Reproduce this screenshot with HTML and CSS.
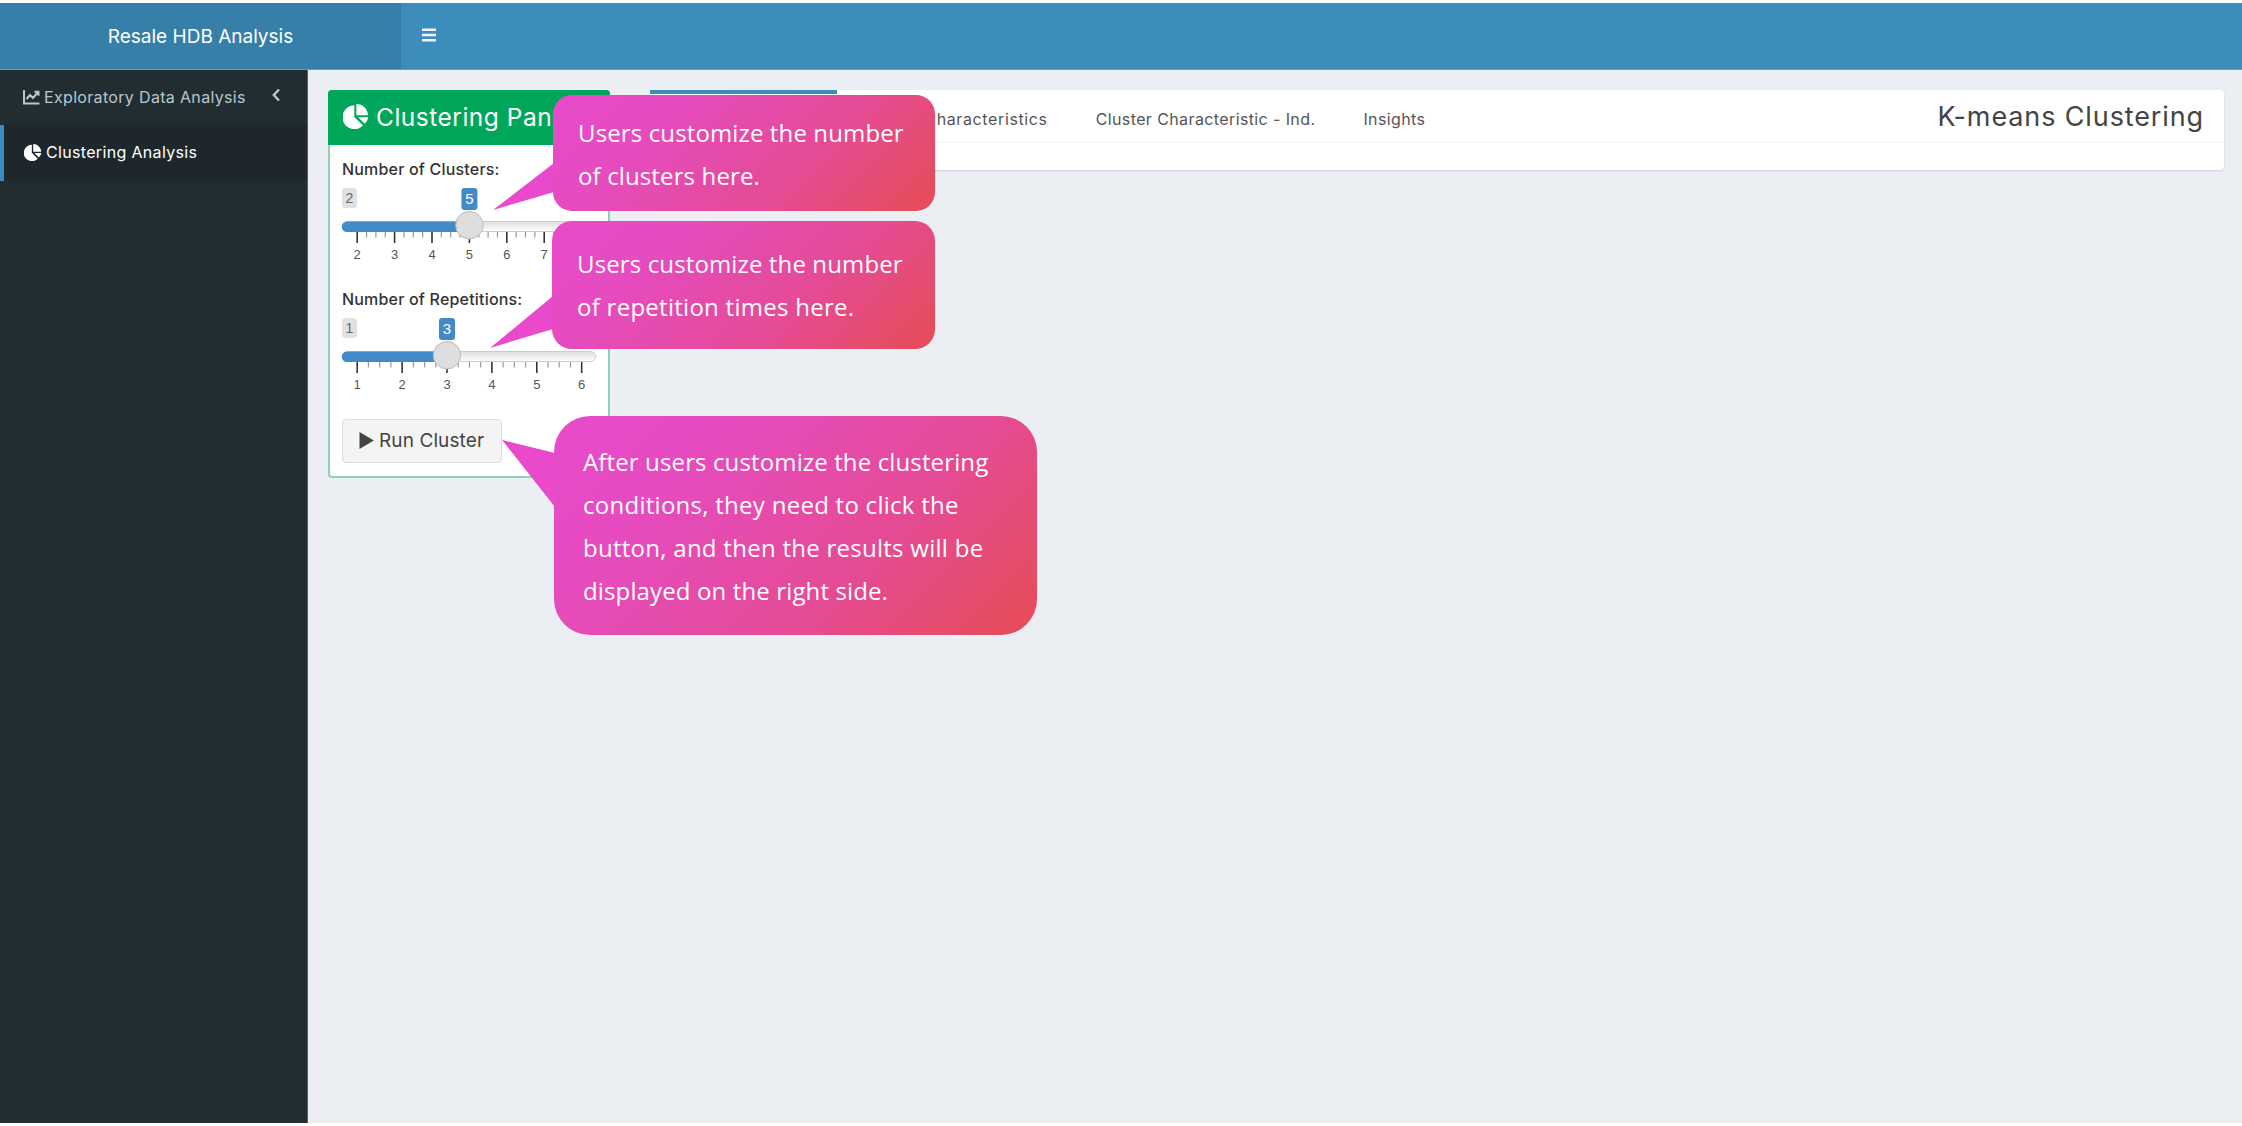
FILE: index.html
```html
<!DOCTYPE html>
<html lang="en">
<head>
<meta charset="utf-8">
<title>Resale HDB Analysis</title>
<link rel="stylesheet" href="styles.css">
</head>
<body>
<div class="app">
  <header class="header">
    <div class="logo">Resale HDB Analysis</div>
    <svg class="menu" viewBox="0 0 14 14"><path d="M0 1.8h14M0 7h14M0 12.200h14"/></svg>
  </header>
  <div class="body">
    <nav class="sidebar">
      <div class="item">
        <svg class="ico-line" viewBox="0 0 17 15"><path d="M1 0v13.500h15.500M3.500 9l3.500-4 3 3 5-6M11.500 1.700h4v4"/></svg>
        <span>Exploratory Data Analysis</span>
        <svg class="chev" viewBox="0 0 8 14"><path d="M7 1.500 1.800 7 7 12.500"/></svg>
      </div>
      <div class="item active">
        <svg class="ico-pie" viewBox="0 0 26 25"><path d="M11.300 1.200A12 12 0 1 0 20 21.600L11.300 13zM13.300 0v11.300H25A11.700 11.700 0 0 0 13.300 0zM15 13.300l6.600 6.500A11 11 0 0 0 25.300 13.300z"/></svg>
        <span>Clustering Analysis</span>
      </div>
    </nav>
    <main class="main">
      <section class="panel">
        <h2 class="panel-head">
          <svg class="ico-pie-lg" viewBox="0 0 26 25"><path d="M11.300 1.200A12 12 0 1 0 20 21.600L11.300 13zM13.300 0v11.300H25A11.700 11.700 0 0 0 13.300 0zM15 13.300l6.600 6.500A11 11 0 0 0 25.300 13.300z"/></svg>
          <span>Clustering Panel</span>
        </h2>
        <div class="panel-body">
          <div class="field">
            <label>Number of Clusters:</label>
            <svg class="slider" id="clusters" viewBox="0 0 254 76"></svg>
          </div>
          <div class="field">
            <label>Number of Repetitions:</label>
            <svg class="slider" id="reps" viewBox="0 0 254 76"></svg>
          </div>
          <button class="run"><svg class="play" viewBox="0 0 15 17"><path d="M.5 0 14.800 8.500.5 17z"/></svg><span>Run Cluster</span></button>
        </div>
      </section>
      <section class="tabs">
        <div class="tab-row">
          <div class="tab current"></div>
          <div class="tab wide">Cluster Characteristics</div>
          <div class="tab">Cluster Characteristic - Ind.</div>
          <div class="tab">Insights</div>
          <h1 class="title">K-means Clustering</h1>
        </div>
      </section>
    </main>
  </div>
</div>
<svg class="tails" viewBox="0 0 70 420"><path d="M64 73 3 120 64 102zM63 206 0 258 63 239zM65 363 12 350 65 417z"/></svg>
<div class="callout c1">Users customize the number<br>of clusters here.</div>
<div class="callout c2">Users customize the number<br><span class="loose">of repetition times here.</span></div>
<div class="callout c3">After users customize the clustering<br><span class="loose">conditions, they need to click the<br>button, and then the results will be</span><br>displayed on the right side.</div>
<script src="sliders.js"></script>
</body>
</html>
```
FILE: styles.css
```css
* { box-sizing: border-box; }
body { margin: 0; background: #fff; font-family: Inter, sans-serif; color: #4a4a4a; }
.app { height: 1126px; padding: 3px 0; display: flex; flex-direction: column; }
.header { height: 67px; background: #3c8dbc; display: flex; align-items: center; flex: none; border-bottom: 1px solid #5e9fc4; }
.logo { width: 401px; height: 100%; background: #367fa9; color: #fff; display: flex; justify-content: center; align-items: center; font-size: 19px; }
.menu { width: 14px; height: 14px; margin-left: 20.5px; margin-top: -2px; }
.menu path { stroke: #eef6fb; stroke-width: 2.4; }
.body { flex: 1; display: flex; min-height: 0; }
.sidebar { width: 308px; background: #222d32; border-right: 1px solid #566065; flex: none; }
.item { height: 55px; display: flex; align-items: center; padding: 0 0 1px 23px; color: #b8c7ce; font-size: 16px; white-space: nowrap; letter-spacing: .33px; }
.item.active { background: #1e282c; color: #fff; border-left: 4px solid #3c8dbc; padding: 0 0 2px 20px; height: 56px; }
.ico-line { width: 17px; height: 15px; margin-right: 4px; }
.ico-line path, .chev path { fill: none; stroke: #b8c7ce; stroke-width: 2; }
.chev { width: 8px; height: 14px; margin-left: 26px; margin-top: -4px; }
.chev path { stroke-width: 2.4; }
.ico-pie { width: 18px; height: 17px; fill: #fff; margin-right: 4px; }
.main { flex: 1; background: #ebeef3; padding: 20px 18px 0 20px; display: flex; align-items: flex-start; gap: 40px; }
.panel { width: 282px; height: 388px; border: 2px solid #8fd1b4; border-radius: 4px; background: #fff; flex: none; }
.panel-head { margin: -2px -2px 0; height: 55px; background: #00a65a; border-radius: 4px 4px 0 0; color: #fff; font-size: 24.5px; letter-spacing: .5px; font-weight: 400; display: flex; align-items: center; padding: 0 0 2px 15px; white-space: nowrap; }
.ico-pie-lg { width: 26px; height: 25px; fill: #fff; margin-right: 7px; margin-top: -1px; }
.panel-body { padding: 12px; }
.field { height: 130px; }
label { display: block; height: 24px; line-height: 24px; font-size: 16px; font-weight: 500; color: #333; white-space: nowrap; letter-spacing: .19px; }
.slider { display: block; width: 254px; height: 76px; margin-top: 7px; overflow: visible; font-family: "Liberation Sans", sans-serif; }
.run { width: 160px; height: 44px; margin: 2px 0 0; padding: 0 0 1px 16px; display: flex; align-items: center; background: #f4f4f4; border: 1px solid #ddd; border-radius: 4px; color: #444; font: 400 19px Inter, sans-serif; letter-spacing: .1px; white-space: nowrap; }
.play { width: 15px; height: 17px; fill: #444; margin-right: 5px; flex: none; }
.tabs { flex: 1; height: 80px; background: #fff; border-radius: 4px; box-shadow: 0 1px 2px rgba(0,0,0,.14); }
.tab-row { height: 53px; border-bottom: 1px solid #f4f4f4; display: flex; }
.tab { height: 52px; padding: 6px 24px 0; display: flex; align-items: center; font-size: 16px; letter-spacing: .39px; color: #555; white-space: nowrap; }
.tab.current { width: 187px; border-top: 4px solid #3c8dbc; }
.tab.wide { letter-spacing: .62px; }
.title { margin: 0 20px 0 auto; font-size: 27px; letter-spacing: .88px; font-weight: 400; line-height: 53px; color: #444; }
.tails { position: absolute; left: 490px; top: 90px; width: 70px; height: 420px; fill: #e84acb; }
.callout { position: absolute; color: #fff; font: 24px/43px "Open Sans", sans-serif; white-space: nowrap; letter-spacing: .13px; background: linear-gradient(135deg, #e84acb 0%, #e64bc0 25%, #e54b94 65%, #e54c78 80%, #e64c5b 96%); }
.loose { letter-spacing: .27px; }
.c1 { left: 553px; top: 95px; width: 382px; height: 116px; border-radius: 19px; padding: 16px 0 0 25px; }
.c2 { left: 552px; top: 221px; width: 383px; height: 128px; border-radius: 20px; padding: 21px 0 0 25px; }
.c3 { left: 554px; top: 416px; width: 483px; height: 219px; border-radius: 36px; padding: 24px 0 0 29px; }
```
FILE: sliders.js
```js
// Draws a range slider: track, filled part, ticks, labels and handle.
function slider(id, min, max, value, step, lastLabel) {
  const x0 = 15.2;
  const cx = x0 + (value - min) * step;
  let s = '<defs><linearGradient id="g-' + id + '" x2="0" y2="1"><stop offset="0" stop-color="#dedede"/><stop offset="1" stop-color="#fff"/></linearGradient></defs>';
  s += '<rect x="0" y="0" width="15" height="20" rx="3" fill="#e1e1e1"/><text x="7.5" y="15" font-size="14" text-anchor="middle" fill="#666">' + min + '</text>';
  s += '<rect x=".5" y="33.500" width="253" height="10" rx="5" fill="url(#g-' + id + ')" stroke="#ccc"/>';
  s += '<path d="M5 33.500H' + cx + 'V44H5A5 5 0 0 1 5 33.500z" fill="#428bca"/>';
  for (let i = 0; i <= (max - min) * 4; i++) {
    const x = x0 + i * step / 4, major = i % 4 === 0;
    s += '<path d="M' + x + ' 44v' + (major ? 11 : 5.5) + '" stroke="' + (major ? '#333' : '#999') + '" stroke-width="' + (major ? 1.6 : 1.2) + '"/>';
    if (major && min + i / 4 <= lastLabel) s += '<text x="' + x + '" y="71" font-size="13" text-anchor="middle" fill="#555">' + (min + i / 4) + '</text>';
  }
  s += '<rect x="' + (cx - 8) + '" y="0" width="16" height="22" rx="3" fill="#428bca"/><text x="' + cx + '" y="15.500" font-size="15" text-anchor="middle" fill="#fff">' + value + '</text>';
  s += '<circle cx="' + cx + '" cy="37.200" r="13.700" fill="#dedede" stroke="#bbb"/>';
  document.getElementById(id).innerHTML = s;
}
slider('clusters', 2, 8, 5, 37.4, 7);
slider('reps', 1, 6, 3, 44.9, 6);
```
